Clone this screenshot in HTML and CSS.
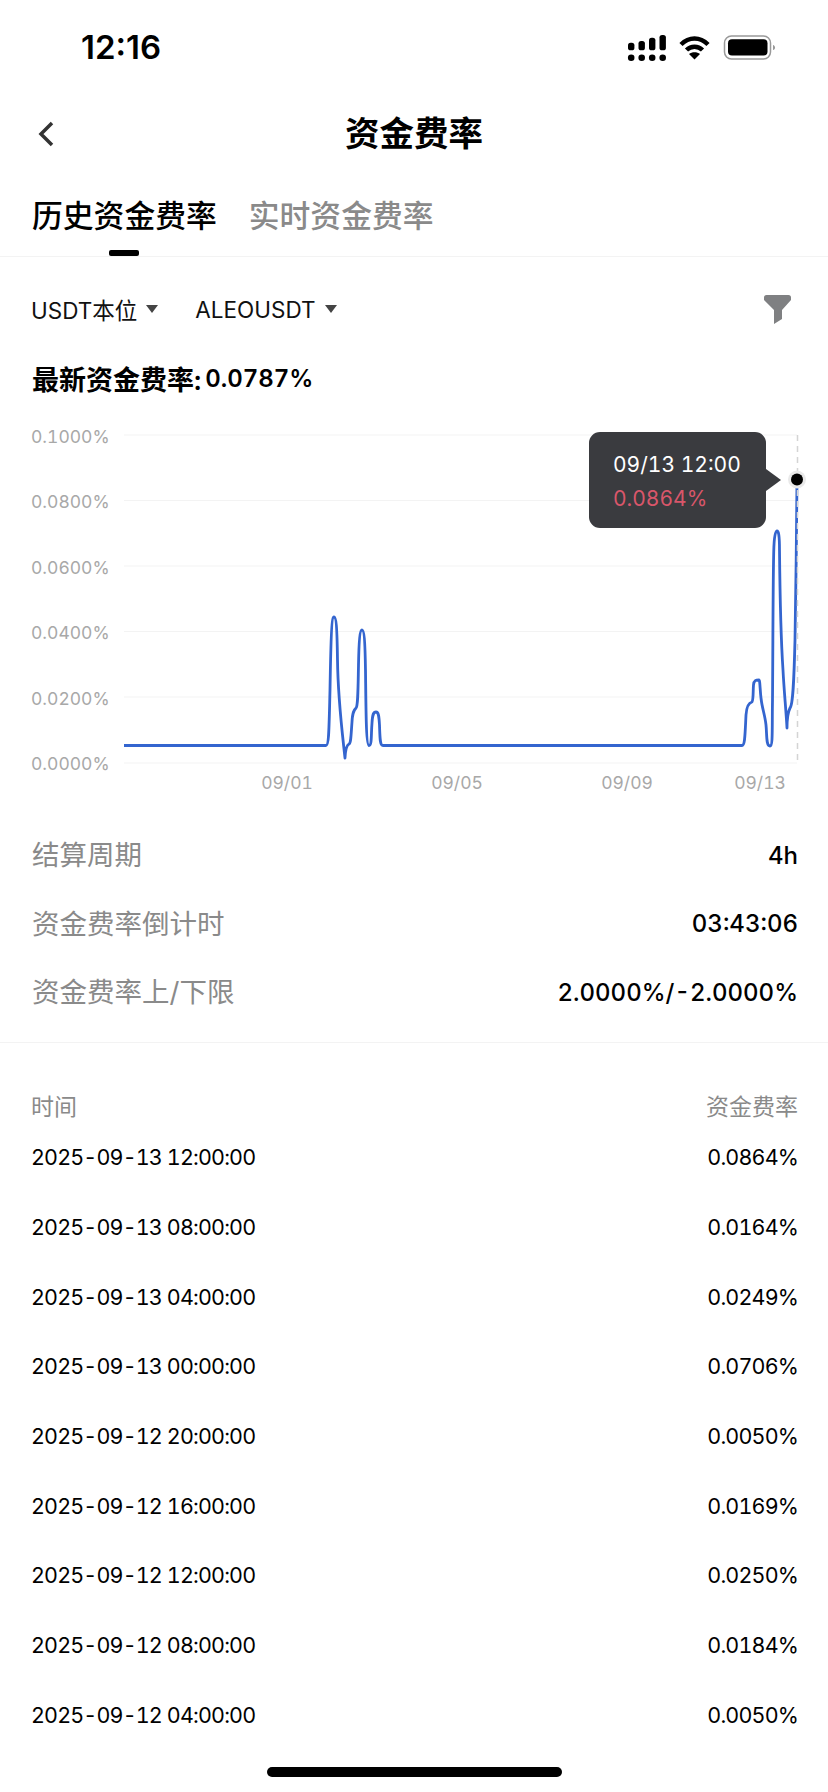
FILE: index.html
```html
<!DOCTYPE html>
<html lang="zh-CN">
  <head>
    <meta charset="UTF-8" />
    <title>资金费率</title>
    <link rel="stylesheet" href="styles.css">
  </head>
  <body>
    <div class="status">
      <span class="time">12:16</span>
      <svg class="status-icons" viewBox="620 30 160 32" width="160" height="32" aria-hidden="true">
        <rect x="627" y="41.7" width="6.4" height="7.6" rx="2.6" />
        <rect x="637.5" y="40" width="6.4" height="9.3" rx="2.6" />
        <rect x="648" y="36.7" width="6.4" height="12.6" rx="2.6" />
        <rect x="658.5" y="34" width="6.4" height="15.3" rx="2.6" />
        <circle cx="630.2" cy="56.7" r="3.3" />
        <circle cx="640.7" cy="56.7" r="3.3" />
        <circle cx="651.2" cy="56.7" r="3.3" />
        <circle cx="661.7" cy="56.7" r="3.3" />
        <path class="wifi" d="M680 43.5 C688 35.5 699 35.5 707 43.5" />
        <path class="wifi" d="M685.5 49 C690 44.5 697 44.5 701.5 49" />
        <path d="M688 53 C691 50.5 696 50.5 699 53 L693.5 58.5 Z" />
        <rect class="batt" x="723.5" y="35" width="46" height="23" rx="7" />
        <rect x="727" y="38.3" width="39.5" height="16.3" rx="4" />
        <path class="nub" d="M772 44 C774.5 44.5 775 48.5 772 49 Z" />
      </svg>
    </div>

    <div class="nav">
      <svg class="back" viewBox="0 0 20 28" width="20" height="28" aria-hidden="true">
        <path d="M16 3 L5 14 L16 25" />
      </svg>
      <h1>资金费率</h1>
    </div>

    <div class="tabs">
      <span class="tab active">历史资金费率</span>
      <span class="tab">实时资金费率</span>
    </div>

    <div class="filters">
      <span class="select">USDT本位<i class="caret"></i></span>
      <span class="select">ALEOUSDT<i class="caret"></i></span>
      <svg class="funnel" viewBox="764 296 27 29" width="27" height="29" aria-hidden="true">
        <path d="M764 298.500 Q764 296 766.500 296 H788.500 Q791 296 791 298.500 V301 L782 311 V320 L774 325 V311 L764 301 Z" />
      </svg>
    </div>

    <div class="latest"><span>最新资金费率:</span><b>0.0787%</b></div>

    <div class="chart">
      <svg class="plot" viewBox="0 420 828 380" width="828" height="380">
        <line class="grid" x1="124" y1="435" x2="797" y2="435" />
        <line class="grid" x1="124" y1="500.500" x2="797" y2="500.500" />
        <line class="grid" x1="124" y1="566" x2="797" y2="566" />
        <line class="grid" x1="124" y1="631.500" x2="797" y2="631.500" />
        <line class="grid" x1="124" y1="697" x2="797" y2="697" />
        <line class="grid" x1="124" y1="763" x2="797" y2="763" />

        <text class="axis" x="31" y="443">0.1000%</text>
        <text class="axis" x="31" y="508">0.0800%</text>
        <text class="axis" x="31" y="574">0.0600%</text>
        <text class="axis" x="31" y="639">0.0400%</text>
        <text class="axis" x="31" y="705">0.0200%</text>
        <text class="axis" x="31" y="770">0.0000%</text>

        <text class="axis mid" x="287" y="789">09/01</text>
        <text class="axis mid" x="457" y="789">09/05</text>
        <text class="axis mid" x="627" y="789">09/09</text>
        <text class="axis mid" x="760" y="789">09/13</text>

        <path class="curve" d="M124 745.500 H326 C329 745.500 329 730 330 690 C331 630 332 617 334 617 C336 617 337 625 337.500 660 C338 700 342 730 345 758 C345.500 748 347 745 349 744 C351 743 351 735 352 722 C352.500 712 354 710 356 708 C358 706 358 690 358.500 665 C359 640 360 630 362 630 C364 630 365 640 365.500 670 C366 710 366 745.500 369 745.500 C372 745.500 371 735 372 723 C372.500 714 373.500 712 376 712 C378.500 712 379 716 379.500 725 C380 740 380 745.500 383 745.500 H742 C745 745.500 745 735 746 715 C746.500 707 748 703 752 702 C753.500 700 753 690 753.500 685 C754 680 756 680 759 680 C760 680 760 690 761 698 C762 708 765 715 766 725 C767 735 766 746 770 746 C773 746 772 730 772.500 700 C773 640 773 560 774 545 C774.500 535 775.500 531 777 531 C778.500 531 779.500 535 779.500 550 C780 600 781 640 783 670 C784 690 786 710 787 728 C787 718 788 712 790 708 C793 705 794 680 795 640 C796 590 796.500 530 797 480" />
        <line class="cursor" x1="797.500" y1="435" x2="797.500" y2="763" />
        <circle class="halo" cx="797" cy="479.500" r="9" />
        <circle cx="797" cy="479.500" r="6" />
      </svg>
      <div class="tooltip">
        <div>09/13 12:00</div>
        <div class="rate">0.0864%</div>
      </div>
    </div>

    <div class="info">
      <div class="info-row"><span>结算周期</span><b>4h</b></div>
      <div class="info-row"><span>资金费率倒计时</span><b>03:43:06</b></div>
      <div class="info-row"><span>资金费率上/下限</span><b>2.0000%/-2.0000%</b></div>
    </div>

    <div class="history">
      <div class="history-head"><span>时间</span><span>资金费率</span></div>
      <div class="row"><span>2025-09-13 12:00:00</span><span>0.0864%</span></div>
      <div class="row"><span>2025-09-13 08:00:00</span><span>0.0164%</span></div>
      <div class="row"><span>2025-09-13 04:00:00</span><span>0.0249%</span></div>
      <div class="row"><span>2025-09-13 00:00:00</span><span>0.0706%</span></div>
      <div class="row"><span>2025-09-12 20:00:00</span><span>0.0050%</span></div>
      <div class="row"><span>2025-09-12 16:00:00</span><span>0.0169%</span></div>
      <div class="row"><span>2025-09-12 12:00:00</span><span>0.0250%</span></div>
      <div class="row"><span>2025-09-12 08:00:00</span><span>0.0184%</span></div>
      <div class="row"><span>2025-09-12 04:00:00</span><span>0.0050%</span></div>
    </div>

    <div class="home-bar"></div>
  </body>
</html>
```

FILE: styles.css
```css
* {
  box-sizing: border-box;
}
html,
body {
  height: 100%;
}
body {
  margin: 0;
  background-color: #fff;
  color: #000;
  font-family: Inter, "Noto Sans CJK SC", sans-serif;
  font-variant-numeric: tabular-nums;
  position: relative;
  overflow: hidden;
}
/* Status bar */
.status {
  height: 94px;
  display: flex;
  align-items: center;
  justify-content: space-between;
  padding: 0 47px 0 81px;
}
.time {
  font-size: 33px;
  font-weight: 600;
  font-variant-numeric: normal;
}
.status-icons {
  fill: #000;
}
.status-icons .wifi {
  fill: none;
  stroke: #000;
  stroke-width: 4.5px;
}
.status-icons .batt {
  fill: none;
  stroke: #999;
  stroke-width: 1.5px;
}
.status-icons .nub {
  fill: #999;
}
/* Title */
.nav {
  height: 78px;
  display: flex;
  align-items: center;
  justify-content: center;
  position: relative;
}
.nav h1 {
  margin: 0 0 4px;
  font-size: 34.500px;
  font-weight: 700;
}
.back {
  position: absolute;
  left: 36px;
  top: 26px;
}
.back path {
  fill: none;
  stroke: #333;
  stroke-width: 3.500px;
}
/* Tabs */
.tabs {
  height: 85px;
  display: flex;
  gap: 32px;
  padding: 0 32px;
  border-bottom: 1px solid #f3f3f3;
}
.tab {
  height: 84px;
  padding-top: 22px;
  font-size: 30.800px;
  font-weight: 500;
  line-height: 44px;
  color: #8a8a8a;
  position: relative;
}
.tab.active {
  color: #000;
}
.tab.active::after {
  content: "";
  position: absolute;
  left: 77px;
  bottom: 0;
  width: 30px;
  height: 6px;
  border-radius: 2px;
  background-color: #000;
}
/* Filters */
.filters {
  height: 104px;
  display: flex;
  align-items: center;
  gap: 37px;
  padding: 0 37px 0 31px;
}
.select {
  display: flex;
  align-items: center;
  gap: 9px;
  font-size: 22.500px;
  color: #111;
}
.caret {
  width: 0;
  height: 0;
  border-left: 6px solid transparent;
  border-right: 6px solid transparent;
  border-top: 8px solid #444;
}
.funnel {
  margin-left: auto;
  fill: #7f8082;
}
.latest {
  height: 34px;
  display: flex;
  align-items: center;
  gap: 4px;
  padding-left: 32px;
  font-size: 27px;
  font-weight: 600;
}
.latest b {
  font-size: 24px;
  font-weight: 600;
}
/* Chart */
.chart {
  height: 380px;
  margin-top: 25px;
  position: relative;
}
.plot {
  display: block;
}
.grid {
  stroke: #f3f3f3;
  stroke-width: 1px;
}
.axis {
  font-size: 17.500px;
  fill: #a8a8a8;
}
.axis.mid {
  text-anchor: middle;
}
.curve {
  fill: none;
  stroke: #3465cf;
  stroke-width: 2.800px;
  stroke-linejoin: round;
}
.cursor {
  stroke: #d4d4d4;
  stroke-width: 1.500px;
  stroke-dasharray: 6 5;
}
.halo {
  fill: #e9e9e9;
}
.tooltip {
  position: absolute;
  left: 589px;
  top: 12px;
  width: 177px;
  height: 96px;
  padding: 16px 0 0 24px;
  border-radius: 11px;
  background-color: #3a3b3f;
  color: #fff;
  font-size: 21px;
  line-height: 34px;
}
.tooltip::after {
  content: "";
  position: absolute;
  left: 177px;
  top: 37px;
  border-left: 15px solid #3a3b3f;
  border-top: 11px solid transparent;
  border-bottom: 11px solid transparent;
}
.tooltip .rate {
  color: #d9566a;
}
/* Info */
.info {
  padding: 19px 30px 17px 32px;
  border-bottom: 1px solid #f3f3f3;
}
.info-row {
  height: 68.500px;
  display: flex;
  align-items: center;
  justify-content: space-between;
  font-size: 27.500px;
  color: #8a8a8a;
}
.info-row b {
  margin-top: 4px;
  font-size: 24px;
  font-weight: 500;
  color: #000;
}
/* History */
.history {
  padding: 44px 30px 0 31px;
}
.history-head {
  height: 36px;
  display: flex;
  align-items: center;
  justify-content: space-between;
  font-size: 23px;
  color: #8a8a8a;
}
.row {
  height: 69.700px;
  display: flex;
  align-items: center;
  justify-content: space-between;
  font-size: 21.500px;
  letter-spacing: -0.850px;
  color: #000;
}
.home-bar {
  position: absolute;
  left: 267px;
  bottom: 15px;
  width: 295px;
  height: 10px;
  border-radius: 5px;
  background-color: #000;
}
```
